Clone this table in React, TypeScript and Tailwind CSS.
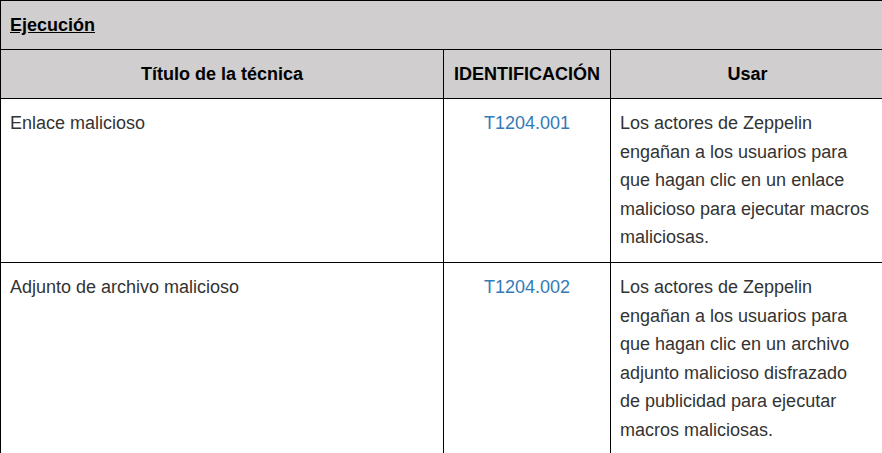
export default function App() {
  const cell = "border border-black px-[9px] py-[10px] align-top";
  const usar = "border border-black pl-[9px] pr-[13px] py-[10px] align-top";
  return (
    <div className="w-[882px] h-[453px] overflow-hidden bg-white" style={{ fontFamily: '"Liberation Sans", Arial, sans-serif' }}>
      <table className="table-fixed border-collapse w-[884px] text-[18px] leading-[28.6px] text-[#333333]">
        <colgroup>
          <col className="w-[443px]" />
          <col className="w-[167px]" />
          <col className="w-[274px]" />
        </colgroup>
        <thead className="leading-[28px]">
          <tr className="bg-[#d0cecf]">
            <th colSpan={3} className={cell + " text-left font-bold text-black"}>
              <span className="underline">Ejecución</span>
            </th>
          </tr>
          <tr className="bg-[#d0cecf]">
            <th className={cell + " text-center font-bold text-black"}>Título de la técnica</th>
            <th className={cell + " text-center font-bold text-black"}>IDENTIFICACIÓN</th>
            <th className={cell + " text-center font-bold text-black"}>Usar</th>
          </tr>
        </thead>
        <tbody>
          <tr>
            <td className={cell}>Enlace malicioso</td>
            <td className={cell + " text-center"}>
              <a className="text-[#337ab7]">T1204.001</a>
            </td>
            <td className={usar}>
              Los actores de Zeppelin engañan a los usuarios para que hagan clic en un enlace malicioso para ejecutar macros maliciosas.
            </td>
          </tr>
          <tr>
            <td className={cell}>Adjunto de archivo malicioso</td>
            <td className={cell + " text-center"}>
              <a className="text-[#337ab7]">T1204.002</a>
            </td>
            <td className={usar}>
              Los actores de Zeppelin engañan a los usuarios para que hagan clic en un archivo adjunto malicioso disfrazado de publicidad para ejecutar macros maliciosas.
            </td>
          </tr>
        </tbody>
      </table>
    </div>
  );
}
